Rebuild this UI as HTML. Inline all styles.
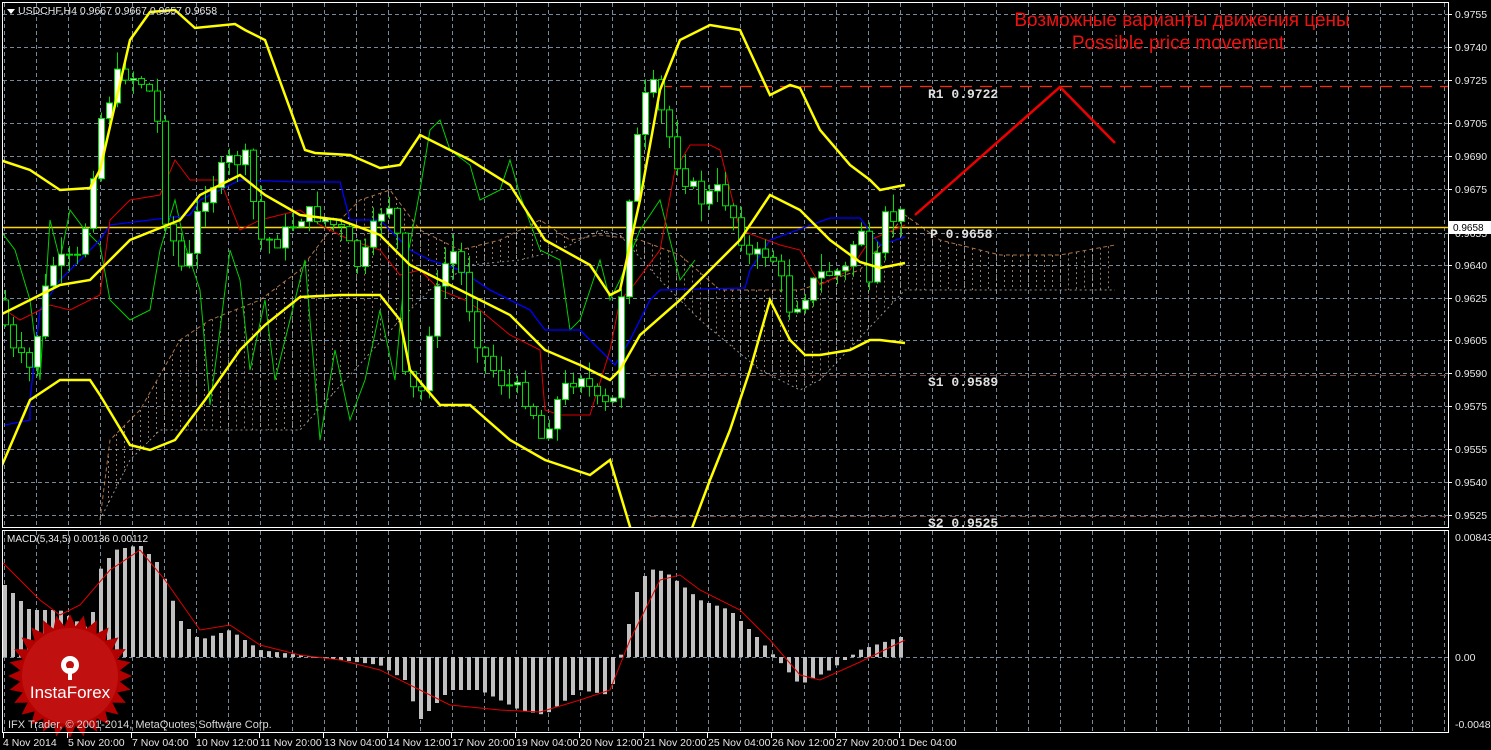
<!DOCTYPE html><html><head><meta charset="utf-8"><style>
body{margin:0;background:#000;width:1491px;height:750px;overflow:hidden}
svg{display:block}
text{font-family:"Liberation Sans",sans-serif}
</style></head><body>
<svg id="s" width="1491" height="750" xmlns="http://www.w3.org/2000/svg">
<defs>
<clipPath id="cm"><rect x="3" y="3" width="1445" height="524"/></clipPath>
<clipPath id="cd"><rect x="3" y="531" width="1445" height="201"/></clipPath>
</defs>
<rect width="1491" height="750" fill="#000"/>
<g id="grid" stroke="#778899" stroke-width="1" stroke-dasharray="4,3"></g>
<g id="cloud" clip-path="url(#cm)" stroke="#d8b090" stroke-width="1" stroke-dasharray="2,3" fill="none" opacity="0.7"></g>
<g clip-path="url(#cm)" fill="none">
<line x1="0" y1="227.5" x2="1448" y2="227.5" stroke="#ffd700" stroke-width="1.5"/>
<line x1="660" y1="86.5" x2="1448" y2="86.5" stroke="#ff2a00" stroke-width="1.2" stroke-dasharray="12,8"/>
<line x1="650" y1="375.5" x2="1448" y2="375.5" stroke="#7a4a40" stroke-width="1" stroke-dasharray="6,4"/>
<line x1="650" y1="516.5" x2="1448" y2="516.5" stroke="#7a4a40" stroke-width="1" stroke-dasharray="6,4"/>
<polyline id="chikou" stroke="#00d000" stroke-width="1"/>
<polyline id="kijun" stroke="#0000ff" stroke-width="1.3"/>
<polyline id="tenkan" stroke="#e00000" stroke-width="1"/>
<g id="candles"></g>
<polyline id="bu" stroke="#ffff00" stroke-width="2.5"/>
<polyline id="bm" stroke="#ffff00" stroke-width="2.5"/>
<polyline id="bl" stroke="#ffff00" stroke-width="2.5"/>
<polyline points="915,215 1060,87 1115,143" stroke="#ee0000" stroke-width="2.5"/>
</g>
<g font-size="13" font-weight="bold" fill="#e0e0e0">
<text x="928" y="98" style="font-family:'Liberation Mono',monospace">R1 0.9722</text>
<text x="930" y="238" style="font-family:'Liberation Mono',monospace">P 0.9658</text>
<text x="928" y="386" style="font-family:'Liberation Mono',monospace">S1 0.9589</text>
<text x="928" y="527" style="font-family:'Liberation Mono',monospace">S2 0.9525</text>
</g>
<text x="1182" y="26" fill="#ee1111" font-size="19" text-anchor="middle">Возможные варианты движения цены</text>
<text x="1178" y="49" fill="#ee1111" font-size="19" text-anchor="middle">Possible price movement</text>
<g clip-path="url(#cd)">
<line x1="3" y1="657.5" x2="1448" y2="657.5" stroke="#778899" stroke-dasharray="4,3"/>
<g id="hist" fill="#c0c0c0"></g>
<polyline id="sig" fill="none" stroke="#e00000" stroke-width="1"/>
</g>
<polygon id="star" fill="#b30000"/>
<circle cx="70" cy="676" r="48" fill="#c01010"/>
<g fill="#fff"><circle cx="70" cy="665" r="9"/><circle cx="70" cy="665" r="4" fill="#c01010"/><rect x="68" y="668" width="4" height="12"/></g>
<text x="70" y="698" fill="#fff" font-size="17" text-anchor="middle">InstaForex</text>
<text x="8" y="728" fill="#d8d8d8" font-size="11">IFX Trader, © 2001-2014, MetaQuotes Software Corp.</text>
<rect x="2.5" y="2.5" width="1446" height="525" fill="none" stroke="#fff"/>
<rect x="2.5" y="530.5" width="1446" height="202" fill="none" stroke="#fff"/>
<polygon points="7,9 15,9 11,14" fill="#fff"/>
<text x="18" y="14" fill="#e8e8e8" font-size="10.5">USDCHF,H4  0.9667 0.9667 0.9657 0.9658</text>
<text x="7" y="542" fill="#e8e8e8" font-size="10">MACD(5,34,5) 0.00136 0.00112</text>
<g id="ax" fill="#e8e8e8" font-size="10.5"></g>
<rect x="1449" y="221" width="42" height="13" fill="#fff"/>
<text x="1453" y="231" fill="#000" font-size="10">0.9658</text>
</svg>
<script>
var NS="http://www.w3.org/2000/svg";
function el(p,t,a,txt){var e=document.createElementNS(NS,t);for(var k in a)e.setAttribute(k,a[k]);if(txt)e.textContent=txt;p.appendChild(e);return e;}
function P(id,a){document.getElementById(id).setAttribute("points",a.map(function(p){return p.join(",")}).join(" "));}
function interp(k,x){for(var i=0;i<k.length-1;i++){if(x>=k[i][0]&&x<=k[i+1][0]){var t=(x-k[i][0])/(k[i+1][0]-k[i][0]);return k[i][1]+t*(k[i+1][1]-k[i][1]);}}return x<k[0][0]?k[0][1]:k[k.length-1][1];}
var g=document.getElementById("grid"),ax=document.getElementById("ax");
for(var x=4;x<1448;x+=32){el(g,"line",{x1:x+.5,y1:3,x2:x+.5,y2:527});el(g,"line",{x1:x+.5,y1:531,x2:x+.5,y2:732});}
var lv=[["0.9755",14],["0.9740",47],["0.9725",80],["0.9705",123],["0.9690",156],["0.9675",189],["0.9655",233],["0.9640",265],["0.9625",298],["0.9605",340],["0.9590",373],["0.9575",406],["0.9555",449],["0.9540",482],["0.9525",515]];
lv.forEach(function(l){el(g,"line",{x1:3,y1:l[1]+.5,x2:1448,y2:l[1]+.5});el(ax,"line",{x1:1448,y1:l[1]+.5,x2:1452,y2:l[1]+.5,stroke:"#fff"});el(ax,"text",{x:1455,y:l[1]+4},l[0]);});
[["0.00843",537],["0.00",657],["-0.00482",724]].forEach(function(l){el(ax,"text",{x:1455,y:l[1]+4},l[0]);});
var dl=["4 Nov 2014","5 Nov 20:00","7 Nov 04:00","10 Nov 12:00","11 Nov 20:00","13 Nov 04:00","14 Nov 12:00","17 Nov 20:00","19 Nov 04:00","20 Nov 12:00","21 Nov 20:00","25 Nov 04:00","26 Nov 12:00","27 Nov 20:00","1 Dec 04:00"];
dl.forEach(function(d,i){var x=3+64*i;el(ax,"line",{x1:x+.5,y1:733,x2:x+.5,y2:738,stroke:"#fff"});el(ax,"text",{x:i==0?3:x+1,y:746},d);});
var ct=[[100,520],[110,440],[140,410],[180,340],[210,320],[260,300],[300,270],[330,230],[360,200],[390,190],[420,230],[460,250],[500,240],[540,220],[570,240],[600,235],[640,240],[680,255],[720,290],[760,290],[800,290],[830,280],[860,270],[905,215],[940,240],[1000,255],[1060,255],[1115,245]];
var cb=[[100,520],[130,460],[160,430],[200,430],[300,430],[400,320],[430,290],[470,265],[520,260],[560,250],[600,230],[620,235],[660,280],[700,320],[760,370],[800,390],[820,380],[905,290],[1115,290]];
var cg=document.getElementById("cloud");
for(var x=100;x<=1115;x+=8){var a=interp(ct,x),b=interp(cb,x);el(cg,"line",{x1:x+.5,y1:Math.min(a,b),x2:x+.5,y2:Math.max(a,b)});}
el(cg,"polyline",{points:ct.map(function(p){return p.join(",")}).join(" "),stroke:"#f4a460","stroke-dasharray":"4,3"});
el(cg,"polyline",{points:cb.map(function(p){return p.join(",")}).join(" "),stroke:"#ccc"});
P("bu",[[0,160],[30,170],[60,190],[90,188],[100,170],[130,40],[150,12],[175,10],[195,28],[235,24],[245,30],[265,40],[305,150],[315,153],[350,155],[380,168],[400,165],[420,135],[430,140],[470,160],[510,185],[545,240],[590,265],[610,295],[620,290],[640,200],[660,90],[680,40],[710,25],[740,30],[770,95],[790,85],[800,88],[820,130],[850,165],[870,180],[880,190],[905,185]]);
P("bm",[[0,315],[30,300],[60,285],[90,280],[100,270],[130,240],[155,230],[180,220],[200,195],[240,175],[265,195],[300,215],[340,220],[380,235],[410,265],[440,280],[480,300],[510,315],[545,350],[580,365],[610,380],[620,370],[640,335],[680,300],[720,260],[740,240],[770,195],[800,210],[830,240],[860,262],[880,268],[905,263]]);
P("bl",[[0,470],[30,400],[60,380],[90,380],[100,395],[130,445],[150,450],[175,440],[205,400],[240,350],[265,325],[300,297],[340,295],[380,295],[400,320],[410,370],[440,405],[470,405],[510,440],[545,460],[590,475],[610,460],[640,560]]);
el(document.getElementById("bl").parentNode,"polyline",{points:"680,560 710,480 730,430 750,370 770,300 790,340 805,355 820,355 850,350 870,340 880,340 905,343",stroke:"#ffff00","stroke-width":2.5,fill:"none"});
P("chikou",[[0,230],[15,250],[30,300],[40,380],[50,220],[60,260],[70,210],[85,230],[100,245],[110,300],[130,320],[150,310],[160,250],[175,200],[185,245],[200,290],[210,405],[220,330],[230,250],[240,280],[250,370],[265,300],[275,380],[290,320],[305,260],[320,440],[335,350],[350,420],[365,380],[380,310],[395,380],[405,270],[420,190],[430,130],[440,120],[450,150],[470,165],[480,200],[500,190],[510,160],[520,195],[540,250],[560,260],[570,330],[580,320],[600,260],[610,300],[620,280],[640,230],[660,200],[680,280],[695,260]]);
P("kijun",[[5,425],[30,420],[30,400],[40,310],[60,280],[100,240],[110,225],[150,220],[190,215],[200,200],[240,180],[300,182],[340,182],[350,220],[380,220],[410,250],[430,260],[460,270],[490,290],[530,310],[545,330],[580,330],[600,350],[615,365],[630,340],[650,300],[660,290],[745,288],[750,270],[770,240],[830,218],[860,218],[880,245],[905,237]]);
P("tenkan",[[5,310],[20,320],[50,305],[70,310],[100,295],[110,220],[130,200],[160,195],[175,160],[190,180],[220,180],[240,230],[260,220],[300,210],[320,225],[350,240],[380,250],[400,275],[420,270],[440,290],[465,300],[480,310],[510,335],[540,350],[545,410],[560,415],[590,415],[610,350],[620,300],[630,290],[660,250],[675,170],[690,145],[710,145],[720,150],[740,230],[780,245],[800,250],[820,285],[850,270],[870,240],[905,225]]);
var pk=[[0,300],[10,350],[30,370],[50,265],[80,260],[100,120],[120,70],[140,80],[155,100],[165,215],[185,280],[200,200],[230,160],[245,160],[260,240],[280,240],[300,215],[320,215],[340,230],[360,270],[380,210],[395,200],[405,380],[420,400],[430,320],[450,245],[460,270],[480,350],[500,380],[530,400],[540,440],[560,395],[580,370],[600,410],[615,400],[625,220],[640,120],[650,80],[660,110],[680,170],[700,200],[720,190],[735,220],[750,260],[770,250],[790,310],[820,275],[845,270],[860,220],[870,300],[885,220],[905,215]];
var seed=7;function r(){seed=(seed*9301+49297)%233280;return seed/233280;}
var cd=document.getElementById("candles"),prev=interp(pk,0);
for(var i=0;i<113;i++){var x=5+8*i;var c=interp(pk,x)+(r()-.5)*20;var o=prev;var hi=Math.min(o,c)-r()*18,lo=Math.max(o,c)+r()*18;
el(cd,"line",{x1:x+.5,y1:hi,x2:x+.5,y2:lo,stroke:"#00e000"});
el(cd,"rect",{x:x-2.5,y:Math.min(o,c),width:6,height:Math.max(1,Math.abs(o-c)),fill:c<o?"#fff":"#000",stroke:"#00e000"});prev=c;}
var hk=[[5,585],[30,610],[60,610],[90,630],[100,570],[115,550],[140,545],[160,565],[180,620],[200,640],[230,630],[260,650],[300,655],[340,660],[380,665],[405,680],[420,720],[450,690],[480,690],[520,710],[545,715],[580,690],[610,695],[625,640],[640,580],[655,568],[670,575],[700,600],[730,610],[760,640],[780,662],[800,685],[830,670],[860,650],[900,637]];
var hg=document.getElementById("hist");
for(var i=0;i<113;i++){var x=5+8*i;var y=interp(hk,x);el(hg,"rect",{x:x-2,y:Math.min(y,657),width:4,height:Math.max(1,Math.abs(y-657))});}
P("sig",[[0,560],[40,600],[60,615],[80,605],[110,570],[140,550],[165,580],[200,630],[230,625],[260,645],[300,655],[340,660],[380,670],[420,690],[450,705],[500,710],[540,712],[580,700],[610,690],[630,640],[660,580],[680,575],[700,590],[740,610],[770,640],[800,675],[820,680],[860,662],[905,640]]);
var st=[];for(var i=0;i<56;i++){var a=i*Math.PI/28,rr=i%2?50:62;st.push([70+rr*Math.cos(a),676+rr*Math.sin(a)]);}P("star",st);
</script>
</body></html>
